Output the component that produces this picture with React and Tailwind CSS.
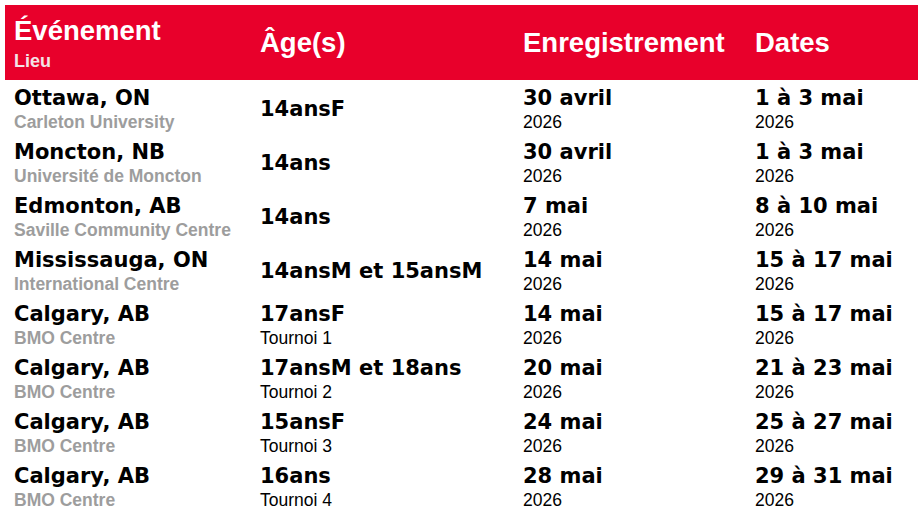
const rows = [
  { city: 'Ottawa, ON', venue: 'Carleton University', age: '14ansF', reg: '30 avril', dates: '1 à 3 mai' },
  { city: 'Moncton, NB', venue: 'Université de Moncton', age: '14ans', reg: '30 avril', dates: '1 à 3 mai' },
  { city: 'Edmonton, AB', venue: 'Saville Community Centre', age: '14ans', reg: '7 mai', dates: '8 à 10 mai' },
  { city: 'Mississauga, ON', venue: 'International Centre', age: '14ansM et 15ansM', reg: '14 mai', dates: '15 à 17 mai' },
  { city: 'Calgary, AB', venue: 'BMO Centre', age: '17ansF', sub: 'Tournoi 1', reg: '14 mai', dates: '15 à 17 mai' },
  { city: 'Calgary, AB', venue: 'BMO Centre', age: '17ansM et 18ans', sub: 'Tournoi 2', reg: '20 mai', dates: '21 à 23 mai' },
  { city: 'Calgary, AB', venue: 'BMO Centre', age: '15ansF', sub: 'Tournoi 3', reg: '24 mai', dates: '25 à 27 mai' },
  { city: 'Calgary, AB', venue: 'BMO Centre', age: '16ans', sub: 'Tournoi 4', reg: '28 mai', dates: '29 à 31 mai' },
]

const cols = 'grid grid-cols-[246px_263px_232px_1fr]'

function Cell({ top, bottom, gray }) {
  return (
    <div className="flex flex-col justify-center">
      <div className="font-['DejaVu_Sans',sans-serif] font-bold text-[21px] leading-[24px] text-black whitespace-nowrap">
        {top}
      </div>
      {bottom && (
        <div
          className={`mt-[2px] font-['Liberation_Sans',Arial,sans-serif] text-[17.5px] leading-[20px] whitespace-nowrap ${
            gray ? 'font-bold text-[#9d9d9d]' : 'text-black'
          }`}
        >
          {bottom}
        </div>
      )}
    </div>
  )
}

export default function App() {
  return (
    <div className="w-[923px] h-[517px] bg-white pt-[5px] px-[5px] overflow-hidden">
      <div className={`${cols} h-[75px] bg-[#e8002b] pl-[9px] text-white font-['Liberation_Sans',Arial,sans-serif] font-bold`}>
        <div className="pt-[11.5px]">
          <div className="text-[27.5px] leading-[28px]">Événement</div>
          <div className="mt-[6px] text-[18px] leading-[20px] text-[#f3e3e6]">Lieu</div>
        </div>
        <div className="flex items-center text-[27.5px] leading-[28px]">Âge(s)</div>
        <div className="flex items-center text-[27.5px] leading-[28px]">Enregistrement</div>
        <div className="flex items-center text-[27.5px] leading-[28px]">Dates</div>
      </div>

      <div className="pl-[9px]">
        {rows.map((r, i) => (
          <div key={i} className={`${cols} h-[54px] pt-[6px] pb-[2px]`}>
            <Cell top={r.city} bottom={r.venue} gray />
            <Cell top={r.age} bottom={r.sub} />
            <Cell top={r.reg} bottom="2026" />
            <Cell top={r.dates} bottom="2026" />
          </div>
        ))}
      </div>
    </div>
  )
}
